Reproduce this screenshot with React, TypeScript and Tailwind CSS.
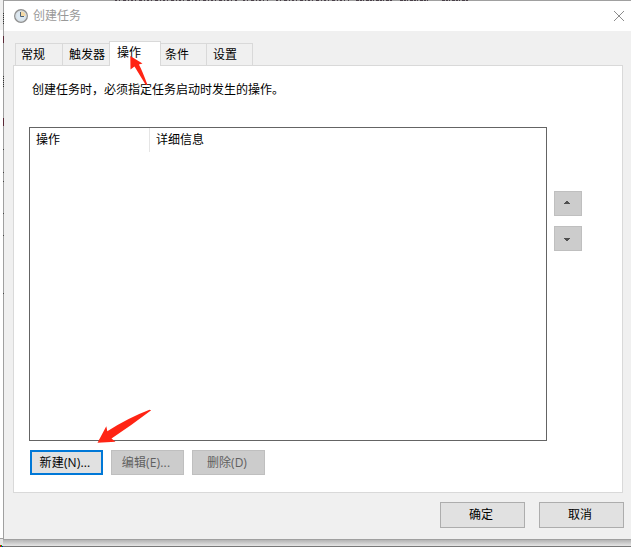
import type { ReactNode } from 'react';

function Tab({ label, className }: { label: string; className: string }) {
  return (
    <div className={`h-[22px] shrink-0 border-t border-r border-[#d9d9d9] bg-[#f0f0f0] pt-[2px] leading-[18px] ${className}`}>
      {label}
    </div>
  );
}

function Button({ children, className }: { children: ReactNode; className: string }) {
  return (
    <button className={`flex shrink-0 items-center justify-center whitespace-nowrap ${className}`}>
      {children}
    </button>
  );
}

function ClockIcon() {
  return (
    <svg className="h-[14px] w-[14px]" viewBox="0 0 14 14">
      <circle cx="7" cy="7" r="6.3" fill="#dce8f1" stroke="#909090" strokeWidth="1.4" />
      <path d="M7 7V2a5 5 0 0 1 5 5Z" fill="#f5d9a4" />
      <circle cx="7" cy="7" r="5" fill="none" stroke="#d3d9de" strokeWidth="0.8" />
      <path d="M6.5 3v4.5H10" fill="none" stroke="#4e6275" strokeWidth="1" />
    </svg>
  );
}

export default function App() {
  return (
    <div
      className="relative h-[547px] w-[631px] overflow-hidden bg-white text-[12px] text-black"
      style={{ fontFamily: '"Open Sans", "Noto Sans CJK SC", sans-serif' }}
    >
      <div className="ml-[3px] flex h-[540px] w-[628px] flex-col border-t border-b border-l border-[#a0a0a0] bg-[#f0f0f0]">
        <header className="flex h-[30px] shrink-0 items-center bg-white pr-[7px] pl-[10px]">
          <ClockIcon />
          <span className="ml-[5px] leading-[18px] text-[#999999]">创建任务</span>
          <svg className="ml-auto h-[10px] w-[10px]" viewBox="0 0 10 10">
            <path d="M0 0 10 10M10 0 0 10" stroke="#8c8c8c" strokeWidth="1" />
          </svg>
        </header>

        <main className="flex flex-col pt-[10px] pl-[9px]">
          <nav className="z-10 -mb-px flex h-[25px] items-end pl-[2px]">
            <Tab label="常规" className="mb-px w-[48px] border-l pl-[5px]" />
            <Tab label="触发器" className="mb-px w-[46px] border-r-0 pl-[6px]" />
            <div className="h-[25px] w-[52px] shrink-0 border-x border-t border-[#d9d9d9] bg-white pt-[2px] pl-[7px] leading-[18px]">
              操作
            </div>
            <Tab label="条件" className="mb-px w-[46px] pl-[4px]" />
            <Tab label="设置" className="mb-px w-[46px] pl-[6px]" />
          </nav>

          <section className="flex h-[428px] w-[610px] flex-col border border-[#d9d9d9] bg-white pl-[15px]">
            <p className="mt-[15px] ml-[3px] h-[18px] leading-[18px]">创建任务时，必须指定任务启动时发生的操作。</p>
            <div className="mt-[28px] flex">
              <div className="h-[314px] w-[518px] shrink-0 border border-[#646464]">
                <div className="flex h-[24px] leading-[23px]">
                  <span className="w-[120px] border-r border-[#e5e5e5] pl-[6px]">操作</span>
                  <span className="pl-[6px]">详细信息</span>
                </div>
              </div>
              <div className="mt-[64px] ml-[7px] flex flex-col gap-[10px]">
                <Button className="h-[25px] w-[28px] border border-[#bfbfbf] bg-[#cccccc]">
                  <svg className="-mt-[2px] -ml-[2px] h-[3px] w-[6px]" viewBox="0 0 6 3" shapeRendering="crispEdges">
                    <path d="M2 0h2v1h1v1h1v1H0V2h1V1h1Z" fill="#505050" />
                  </svg>
                </Button>
                <Button className="h-[25px] w-[28px] border border-[#bfbfbf] bg-[#cccccc]">
                  <svg className="mt-[2px] -ml-[2px] h-[3px] w-[6px]" viewBox="0 0 6 3" shapeRendering="crispEdges">
                    <path d="M0 0h6v1H5v1H4v1H2V2H1V1H0Z" fill="#505050" />
                  </svg>
                </Button>
              </div>
            </div>
            <div className="mt-[9px] ml-px flex gap-[8px]">
              <Button className="h-[25px] w-[73px] border-2 border-[#0078d7] bg-[#e1e1e1] pr-[3px] tracking-[0.15px]">新建(N)...</Button>
              <Button className="h-[25px] w-[73px] border border-[#bfbfbf] bg-[#cccccc] pr-[3px] tracking-[0.15px] text-[#606060]">编辑(E)...</Button>
              <Button className="h-[25px] w-[73px] border border-[#bfbfbf] bg-[#cccccc] pr-[3px] text-[#606060]">删除(D)</Button>
            </div>
          </section>

          <footer className="mt-[9px] flex gap-[14px] pl-[427px]">
            <Button className="h-[26px] w-[85px] border border-[#adadad] bg-[#e1e1e1] pr-[3px]">确定</Button>
            <Button className="h-[26px] w-[85px] border border-[#adadad] bg-[#e1e1e1] pr-[3px]">取消</Button>
          </footer>
        </main>
      </div>
      <div className="ml-[3px] h-[6px] bg-linear-to-b from-[#b4b4b4] to-[#e6e6e6]" />
      <div className="h-px bg-[#787878]" />

      {/* Slivers of the window behind, and the pointer arrows over the dialog */}
      <svg className="pointer-events-none absolute inset-0 z-20 h-[547px] w-[631px]" viewBox="0 0 631 547">
        <g shapeRendering="crispEdges">
          <path d="M0 0h3v30H0Z" fill="#f0f0f0" />
          <path d="M0 538h3v1H0Z" fill="#a0a0a0" />
          <path d="M0 539h3v7H0Z" fill="#e4e4e4" />
          <path d="M115 .5H237M243 .5H268M276 .5H349" stroke="#493f48" strokeDasharray="2 2 1 3 3 2 1 2" />
          <path d="M356 .5H392M400 .5H430M442 .5H469" stroke="#493f48" strokeDasharray="3 1 2 1 1 2" />
          <path d="M3.5 13V24M3.5 76V87" stroke="#333" strokeDasharray="1 1" />
          <path d="M3.5 36V43M3.5 118V126" stroke="#5a2836" />
          <path d="M3.5 149v1M3.5 172v1M3.5 181v1M3.5 213v1M3.5 235v1M3.5 293v1" stroke="#444" />
          <path d="M0 545h1v2H0Z" fill="#e00000" />
          <path d="M1 545h1v2H1Z" fill="#00b000" />
          <path d="M2 546h1v1H2Z" fill="#0000e0" />
        </g>
        <path d="M130.3 56 142.5 63.5 138.9 64.5Q142 70 147.5 85H145.8L134.5 66.5 130.5 69.5Z" fill="#ff2414" />
        <path d="M97.5 442.7 106.3 426.3 107.3 431.3Q128 418 149.5 409.8L151.2 410.3Q132 425 111.5 438.5L115.5 441.8Z" fill="#ff2414" />
      </svg>
    </div>
  );
}
